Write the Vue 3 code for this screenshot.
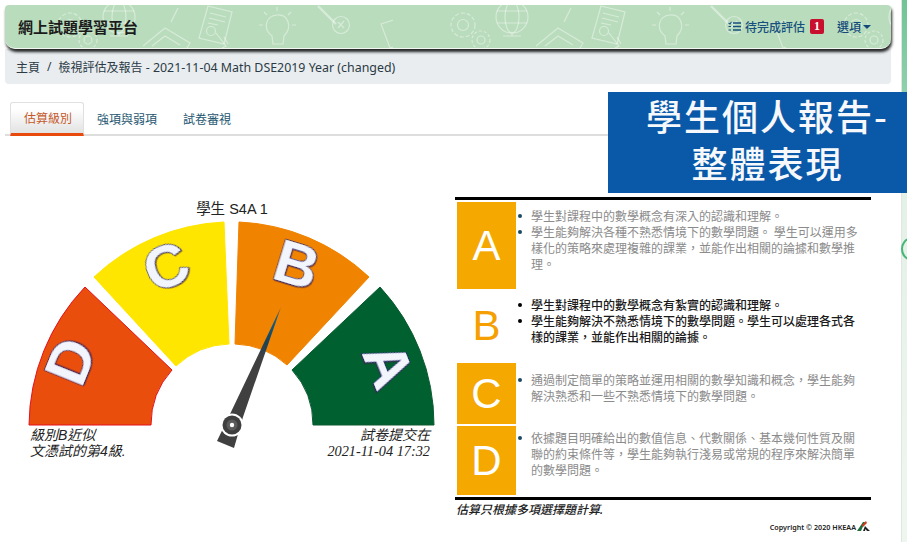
<script setup>
const segments = [
  { key: 'D', d: 'M29 426 A203 203 0 0 1 85 288 L172 371 A81 81 0 0 0 151 426 Z', fill: '#e94e0c', stroke: '#e3101e', x: 70, y: 362, r: -68 },
  { key: 'C', d: 'M94 278 A203 203 0 0 1 224 223 L229 345 A81 81 0 0 0 176 367 Z', fill: '#ffe600', stroke: '#ffe600', x: 166, y: 267, r: -22 },
  { key: 'B', d: 'M239 223 A203 203 0 0 1 369 278 L287 366 A81 81 0 0 0 235 345 Z', fill: '#f08300', stroke: '#f08300', x: 297, y: 265, r: 17 },
  { key: 'A', d: 'M380 288 A203 203 0 0 1 434 426 L313 426 A81 81 0 0 0 292 371 Z', fill: '#00602f', stroke: '#0a5a30', x: 389, y: 366, r: 68 },
]

const levels = [
  { key: 'A', cls: 'row-a', items: ['學生對課程中的數學概念有深入的認識和理解。', '學生能夠解決各種不熟悉情境下的數學問題。 學生可以運用多樣化的策略來處理複雜的課業\uFF0C並能作出相關的論據和數學推理。'] },
  { key: 'B', cls: 'row-b', items: ['學生對課程中的數學概念有紮實的認識和理解。', '學生能夠解決不熟悉情境下的數學問題。學生可以處理各式各樣的課業\uFF0C並能作出相關的論據。'] },
  { key: 'C', cls: 'row-c', items: ['通過制定簡單的策略並運用相關的數學知識和概念\uFF0C學生能夠解決熟悉和一些不熟悉情境下的數學問題。'] },
  { key: 'D', cls: 'row-d', items: ['依據題目明確給出的數值信息、代數關係、基本幾何性質及關聯的約束條件等\uFF0C學生能夠執行淺易或常規的程序來解決簡單的數學問題。'] },
]
</script>

<template>
  <div class="page">
    <div class="strip"><span class="strip-ring"></span></div>

    <div class="top">
      <header class="navbar">
        <svg class="pattern" width="100%" height="100%" aria-hidden="true">
          <defs>
            <pattern id="doodles" x="-5" y="-5" width="393" height="60" patternUnits="userSpaceOnUse">
              <g fill="none" stroke="#fff" stroke-opacity=".42" stroke-width="1.2">
                <!-- certificate -->
                <path d="M208 6 L232 12 L224 44 L199 38 Z" />
                <path d="M210 13 L226 17 M209 18 L225 22 M208 23 L218 25" />
                <circle cx="211" cy="31" r="4.5" />
                <path d="M216 33 L226 46 L222 48 M224 37 L228 44" />
                <!-- bulb -->
                <path d="M272 36 C262 28 266 16 277 15 C288 14 293 27 284 36 L283 44 L273 44 Z" />
                <path d="M277 7 L277 11 M264 12 L267 15 M291 12 L288 15 M259 25 L263 25 M296 25 L292 25" />
                <!-- spanner -->
                <path d="M318 6 L336 24" stroke-width="2.4" />
                <circle cx="341" cy="25" r="8.5" />
                <path d="M338 22 L344 28 M344 21 L338 28" />
                <!-- board -->
                <path d="M381 24 L418 12 L426 38 L390 48 Z" />
                <path d="M396 32 L402 26 M406 30 L410 24" />
                <path d="M408 46 L414 60" />
                <!-- gears -->
                <circle cx="70" cy="25" r="12" stroke-dasharray="4 2" />
                <circle cx="70" cy="25" r="5.5" />
                <circle cx="88" cy="40" r="9" stroke-dasharray="3 2" />
                <circle cx="88" cy="40" r="4" />
                <!-- globe -->
                <circle cx="119" cy="17" r="16" />
                <ellipse cx="119" cy="17" rx="7" ry="16" />
                <path d="M104 11 L134 11 M104 23 L134 23" />
                <path d="M110 36 L128 36 M119 33 L119 36" />
                <!-- pencil -->
                <path d="M178 8 L171 22" />
                <!-- book -->
                <path d="M143 46 L165 28 L190 43 L180 60" />
                <path d="M152 46 L165 36 L180 45" />
              </g>
            </pattern>
          </defs>
          <rect width="100%" height="100%" fill="url(#doodles)" />
        </svg>
        <h1 class="brand">網上試題學習平台</h1>
        <nav class="nav-right">
          <svg class="list-icon" width="13" height="11" viewBox="0 0 13 11" aria-hidden="true">
            <path d="M5 2 H13 M5 5.5 H13 M5 9 H13" stroke="#16507e" stroke-width="1.4" fill="none" />
            <path d="M0.5 2 L2 3 L3.5 0.8 M0.5 5.5 L3 5.5 M0.5 9 L3 9" stroke="#16507e" stroke-width="1.1" fill="none" />
          </svg>
          <span class="pending">待完成評估</span>
          <span class="badge">1</span>
          <span class="options">選項<i class="caret"></i></span>
        </nav>
      </header>

      <div class="crumb">
        <span>主頁</span><span class="sep">/</span><span>檢視評估及報告<span class="crumb-latin"> - 2021-11-04 Math DSE2019 Year (changed)</span></span>
      </div>

      <div class="tabs">
        <span class="tab active">估算級別</span>
        <span class="tab">強項與弱項</span>
        <span class="tab">試卷審視</span>
      </div>
    </div>

    <div class="banner">
      <div class="banner-line">學生個人報告-</div>
      <div class="banner-line">整體表現</div>
    </div>

    <main class="content">
      <svg class="gauge" width="450" height="290" viewBox="0 190 450 290">
        <defs>
          <linearGradient id="needle" gradientUnits="userSpaceOnUse" x1="281" y1="308" x2="232" y2="426">
            <stop offset="0" stop-color="#8a5a20" />
            <stop offset=".1" stop-color="#145f85" />
            <stop offset=".3" stop-color="#1c4257" />
            <stop offset=".42" stop-color="#404040" />
            <stop offset="1" stop-color="#404040" />
          </linearGradient>
          <filter id="letter-shadow" x="-20%" y="-20%" width="140%" height="140%">
            <feDropShadow dx="1" dy="1" stdDeviation=".6" flood-color="#4a1c40" flood-opacity=".6" />
          </filter>
        </defs>

        <text class="g-title" x="232" y="215" text-anchor="middle">學生 S4A 1</text>

        <path v-for="s in segments" :key="s.key" :d="s.d" :fill="s.fill" :stroke="s.stroke" stroke-width="1" />

        <text
          v-for="s in segments"
          :key="'t' + s.key"
          class="g-letter"
          text-anchor="middle"
          filter="url(#letter-shadow)"
          :transform="`translate(${s.x} ${s.y}) rotate(${s.r}) translate(0 21)`"
        >{{ s.key }}</text>

        <path d="M281 308 L243 418 L234 449 L217 442 L231 413 Z" fill="url(#needle)" />
        <circle cx="232" cy="426" r="11.5" fill="#fff" />
        <circle cx="232" cy="426" r="9.5" fill="#3f3f3f" />
        <circle cx="232" cy="426" r="5.5" fill="#5b5b5b" />
        <circle cx="232" cy="426" r="2.2" fill="#fff" />

        <text class="g-cap" x="30" y="441">級別B近似</text>
        <text class="g-cap" x="30" y="457">文憑試的第4級.</text>
        <text class="g-cap" x="430" y="441" text-anchor="end">試卷提交在</text>
        <text class="g-date" x="430" y="457" text-anchor="end">2021-11-04 17:32</text>
      </svg>

      <section class="side">
        <div class="levels">
          <div v-for="l in levels" :key="l.key" class="row" :class="l.cls">
            <div class="mark">{{ l.key }}</div>
            <ul class="points">
              <li v-for="(t, i) in l.items" :key="i">{{ t }}</li>
            </ul>
          </div>
        </div>
        <p class="note">估算只根據多項選擇題計算.</p>
        <div class="copy">
          <span>Copyright © 2020 HKEAA</span>
          <svg class="copy-logo" width="13" height="11" viewBox="0 0 13 11" aria-hidden="true">
            <path d="M0 10 L6 1 L8 1 L4 10 Z" fill="#1f6b3a" />
            <path d="M5 4 L9 0 L10 2 L6 6 Z" fill="#d23a1c" />
            <path d="M6 10 L8 5 L13 10 L10 10 L8.5 8 L8 10 Z" fill="#222" />
          </svg>
        </div>
      </section>
    </main>
  </div>
</template>

<style scoped>
.page {
  position: relative;
  width: 907px;
  height: 542px;
  overflow: hidden;
  background: #fff;
  font-family: "Noto Sans", "Noto Sans CJK TC", sans-serif;
  color: #222;
}
.strip {
  position: absolute;
  top: 0;
  right: 0;
  bottom: 0;
  width: 5px;
  border-left: 1px solid #e2e6e3;
  background: linear-gradient(#6fc497 0, #8ed0ac 90px, #e4f1e7 190px, #eef6f0 100%);
}
.strip-ring {
  position: absolute;
  top: 238px;
  left: -1px;
  width: 14px;
  height: 18px;
  border: 2px solid #45b877;
  border-radius: 50%;
}
.top {
  padding: 5px 16px 0 5px;
}
.navbar {
  position: relative;
  z-index: 1;
  display: flex;
  align-items: center;
  justify-content: space-between;
  height: 44px;
  padding: 0 20px 0 13px;
  box-sizing: border-box;
  background: #b9dcbc;
  border-bottom: 1px solid #f2f7f2;
  border-radius: 4px 4px 10px 10px;
  box-shadow: 1px 3px 3px rgba(0, 0, 0, 0.85);
}
.pattern {
  position: absolute;
  inset: 0;
  border-radius: inherit;
}
.brand {
  position: relative;
  margin: 0;
  font-size: 15px;
  font-weight: 700;
  color: #1b1b1b;
}
.nav-right {
  position: relative;
  display: flex;
  align-items: center;
  font-size: 12px;
  font-weight: 500;
  color: #16507e;
}
.list-icon {
  margin-right: 4px;
}
.badge {
  width: 14px;
  height: 15px;
  margin: 0 13px 0 5px;
  border-radius: 2px;
  background: #c8102e;
  color: #fff;
  font: 700 12px/15px "Liberation Serif", serif;
  text-align: center;
}
.options {
  display: flex;
  align-items: center;
  color: #12487a;
}
.caret {
  width: 0;
  height: 0;
  margin-left: 2px;
  border: 4px solid transparent;
  border-top-color: #12487a;
  border-bottom: 0;
}
.crumb {
  display: flex;
  align-items: center;
  height: 35px;
  padding: 0 11px;
  background: #e9edf0;
  border-radius: 0 0 4px 4px;
  font-size: 12px;
  color: #2b3a44;
}
.crumb-latin {
  font-size: 12.4px;
}
.sep {
  margin: 0 7px;
}
.tabs {
  display: flex;
  height: 34px;
  margin-top: 18px;
  padding-left: 5px;
  box-sizing: border-box;
  border-bottom: 2px solid #dedede;
}
.tab {
  display: flex;
  align-items: center;
  height: 34px;
  box-sizing: border-box;
  padding: 0 13px;
  font-size: 12px;
  white-space: nowrap;
  color: #1d5570;
}
.active {
  width: 74px;
  border: 1px solid #e0e0e0;
  border-bottom: 3px solid #e8490c;
  border-radius: 3px 3px 0 0;
  background: linear-gradient(#fff 20%, #e2e2e2);
  color: #c45a2c;
}
.banner {
  position: absolute;
  top: 92px;
  left: 608px;
  width: 299px;
  height: 101px;
  box-sizing: border-box;
  padding-left: 20px;
  background: #0a58a8;
  color: #f6f8fb;
  font-family: "Noto Sans CJK TC", sans-serif;
  font-size: 36px;
  font-weight: 500;
  letter-spacing: 2px;
  text-align: center;
}
.banner-line {
  height: 47px;
  line-height: 47px;
}
.content {
  display: flex;
  align-items: flex-start;
  padding-top: 53px;
}
.gauge {
  flex: none;
  font-family: "Liberation Sans", "Noto Sans CJK TC", sans-serif;
}
.g-title {
  font-size: 14.5px;
  fill: #222;
}
.g-letter {
  font-family: "Liberation Sans", sans-serif;
  font-size: 60px;
  font-weight: 700;
  fill: #f3f5fd;
  stroke: #27277f;
  stroke-width: 1.4px;
  paint-order: stroke;
}
.g-cap {
  font-size: 14px;
  font-style: italic;
  fill: #222;
}
.g-date {
  font-family: "Liberation Serif", serif;
  font-size: 14.3px;
  font-style: italic;
  fill: #222;
}
.side {
  width: 416px;
  margin: 8px 0 0 5px;
}
.levels {
  box-sizing: border-box;
  padding: 2px 0 2px 2px;
  border-top: 3px solid #000;
  border-bottom: 3px solid #000;
}
.row {
  display: flex;
  align-items: flex-start;
}
.row-a {
  height: 87px;
}
.row-b {
  height: 74px;
}
.row-c {
  height: 61px;
  margin-bottom: 2px;
}
.row-d {
  height: 69px;
}
.mark {
  flex: none;
  display: flex;
  align-items: center;
  justify-content: center;
  width: 59px;
  height: 100%;
  background: #f5a800;
  color: #fff;
  font-family: "Liberation Sans", sans-serif;
  font-size: 42px;
}
.row-b .mark {
  background: none;
  color: #f5a000;
}
.points {
  width: 332px;
  margin: 0;
  padding: 0 0 0 15px;
  list-style: none;
  font-family: "Noto Sans CJK TC", sans-serif;
  font-size: 12px;
  line-height: 16px;
  color: #8b8b8b;
}
.points li {
  position: relative;
}
.points li::before {
  content: "";
  position: absolute;
  left: -13px;
  top: 6px;
  width: 4px;
  height: 4px;
  border-radius: 50%;
  background: #1d4a63;
}
.row-a .points {
  padding-top: 6px;
}
.row-b .points {
  padding-top: 8px;
  color: #1a1a1a;
  font-weight: 500;
}
.row-b .points li::before {
  background: #000;
}
.row-c .points {
  padding-top: 9px;
}
.row-d .points {
  padding-top: 4px;
}
.note {
  margin: 1px 0 0 1px;
  font-size: 12px;
  line-height: 18px;
  font-style: italic;
  font-weight: 500;
  color: #222;
}
.copy {
  display: flex;
  align-items: center;
  justify-content: flex-end;
  height: 11px;
  margin-top: 2px;
  padding-right: 1px;
  font-size: 7.2px;
  font-weight: 600;
  color: #222;
}
.copy-logo {
  margin-left: 1px;
}
</style>
